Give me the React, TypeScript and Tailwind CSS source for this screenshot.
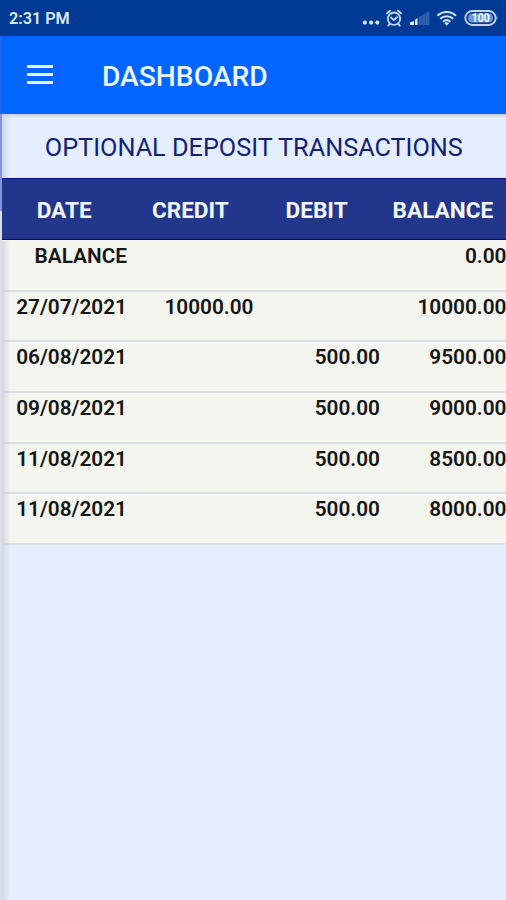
const rows = [
  { date: "BALANCE", credit: "", debit: "", balance: "0.00" },
  { date: "27/07/2021", credit: "10000.00", debit: "", balance: "10000.00" },
  { date: "06/08/2021", credit: "", debit: "500.00", balance: "9500.00" },
  { date: "09/08/2021", credit: "", debit: "500.00", balance: "9000.00" },
  { date: "11/08/2021", credit: "", debit: "500.00", balance: "8500.00" },
  { date: "11/08/2021", credit: "", debit: "500.00", balance: "8000.00" },
];

function StatusIcons() {
  return (
    <svg width="146" height="36" viewBox="360 0 146 36" fill="none">
      <g fill="#d9e6ff">
        <circle cx="364.9" cy="22.6" r="2.1" />
        <circle cx="371.1" cy="22.6" r="2.1" />
        <circle cx="377.3" cy="22.6" r="2.1" />
      </g>
      <g stroke="#c3d6f8" strokeWidth="1.9" strokeLinecap="round">
        <circle cx="394" cy="18.7" r="6.2" />
        <path d="M391 17.6l2.8 2.4 3.4-2.8M387 13.3l3-2.6M401 13.3l-3-2.6M389.6 24l-1.3 1.6M398.4 24l1.3 1.6" />
      </g>
      <path d="M410 25v-2.6l4-1.3V25z" fill="#e2ecff" />
      <path d="M415 25v-5.2l2.5-1.7V25z" fill="#e2ecff" />
      <path d="M418.8 25v-8.1l10.6-5.7V25z" fill="#2c62ad" />
      <path d="M422 25v-9.6M425.6 25V13.5" stroke="#1b50a0" strokeWidth="0.8" />
      <g stroke="#d3e2fc" strokeWidth="2.1">
        <path d="M437.4 15.7c5.4-5 13.2-5 18.6 0" />
        <path d="M440.2 18.8c3.8-3.4 9.2-3.4 13 0" />
        <path d="M443 21.7c2.2-1.9 5.2-1.9 7.4 0" />
      </g>
      <path d="M446.7 25.7l-2.4-2.6c1.4-1.1 3.4-1.1 4.8 0z" fill="#e2ecff" />
      <rect x="465.3" y="11" width="30.4" height="14" rx="7" stroke="#c3d6f8" strokeWidth="1.8" />
      <rect x="468" y="13.4" width="25" height="9.2" rx="4.6" fill="#6f96d4" />
      <path d="M496.8 15.5q1.6 2.5 0 5z" fill="#c3d6f8" />
      <text x="480.7" y="22.4" textAnchor="middle" fontSize="12" fontWeight="700" fill="#f1f6ff" textLength="18" lengthAdjust="spacingAndGlyphs">100</text>
    </svg>
  );
}

export default function App() {
  return (
    <div className="relative flex h-[900px] w-[506px] flex-col overflow-hidden bg-[#e5eeff] font-['Roboto',sans-serif]">
      <div className="flex h-9 shrink-0 items-center justify-between bg-[#003a94] pl-[9px]">
        <span className="pt-[3px] text-[16.2px] font-semibold leading-none text-[#dfeaff]">2:31 PM</span>
        <StatusIcons />
      </div>
      <header className="flex h-[78px] shrink-0 items-center bg-[#0066ff] pl-[27px]">
        <div className="flex w-[75px] flex-col gap-[5px] pb-[1px]">
          <span className="h-[3px] w-[26px] bg-[#eaf4ff]" />
          <span className="h-[3px] w-[26px] bg-[#eaf4ff]" />
          <span className="h-[3px] w-[26px] bg-[#eaf4ff]" />
        </div>
        <h1 className="pt-1 text-[28.2px] font-medium leading-none text-[#edf5ff]">DASHBOARD</h1>
      </header>
      <div className="h-1 shrink-0 bg-gradient-to-b from-[#c4cee2] to-[#e5eeff]" />
      <h2 className="flex h-[60px] shrink-0 items-center whitespace-nowrap pl-[44.8px] text-[25.25px] font-normal leading-none text-[#141f79]">
        OPTIONAL DEPOSIT TRANSACTIONS
      </h2>
      <div className="grid h-[62px] shrink-0 grid-cols-4 items-center border-y border-[#00107c] bg-[#22378c] pl-[1px] pt-[5px] text-center text-[22.6px] font-bold leading-none text-[#f5f7ff]">
        <span>DATE</span>
        <span>CREDIT</span>
        <span>DEBIT</span>
        <span>BALANCE</span>
      </div>
      <div className="bg-[#f4f5ef] pt-[1px]">
        {rows.map((r, i) => (
          <div
            key={i}
            className="grid h-[50.65px] grid-cols-4 border-b-2 border-[#dadde6] bg-[#f4f5ef] pt-[5px] text-right text-[20.8px] font-semibold leading-[21px] text-[#151515]"
          >
            <span className="-mr-[0.5px]">{r.date}</span>
            <span className="-mr-[0.5px]">{r.credit}</span>
            <span className="-mr-[0.5px]">{r.debit}</span>
            <span className="-mr-[0.5px]">{r.balance}</span>
          </div>
        ))}
      </div>
      <div className="absolute left-0 top-9 flex h-[864px] w-0.5 flex-col">
        <div className="h-[78px] bg-[#2463e4]" />
        <div className="h-[97px] bg-[#8293e0]" />
        <div className="flex-1 bg-[#dcdfea]" />
      </div>
      <div className="absolute left-0.5 top-[114px] h-[64px] w-2 bg-gradient-to-r from-[#cbd4e8] to-transparent" />
      <div className="absolute left-0.5 top-[241px] h-[659px] w-2 bg-gradient-to-r from-[#d3d7e0] to-transparent" />
    </div>
  );
}
